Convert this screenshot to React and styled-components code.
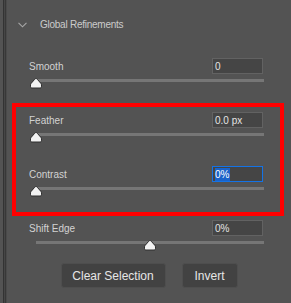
import styled, { createGlobalStyle } from 'styled-components';

const GlobalStyle = createGlobalStyle`
  html, body {
    margin: 0;
    padding: 0;
    background-color: #535353;
  }
  body {
    font-family: "Liberation Sans", Arial, sans-serif;
  }
`;

const Page = styled.div`
  display: flex;
  width: 291px;
  height: 303px;
  background-color: #535353;
  overflow: hidden;
`;

/* the dark double rule on the left edge of the panel */
const EdgeStrip = styled.div`
  flex: 0 0 4px;
  margin-left: 3px;
  background: linear-gradient(
    to right,
    #333333 0 1px,
    #464646 1px 2px,
    #383838 2px 3px,
    #4a4a4a 3px 4px
  );
`;

const Content = styled.div`
  flex: 1;
  display: flex;
  flex-direction: column;
  padding: 17px 7px 0 5px;
`;

const SectionHeader = styled.div`
  display: flex;
  align-items: center;
  height: 16px;
  padding-left: 6px;
  gap: 13px;
`;

const Chevron = styled.svg`
  display: block;
  margin-top: -1px;
`;

const SectionTitle = styled.span`
  font-size: 10px;
  line-height: 16px;
  letter-spacing: -0.25px;
  color: #cbcbcb;
`;

const Controls = styled.div`
  display: flex;
  flex-direction: column;
  margin-top: 25px;
  padding: 0 21px 0 17px;
`;

const Highlight = styled.div`
  display: flex;
  flex-direction: column;
  margin: -9px -21px 4px -17px;
  padding: 5px 17px 0 13px;
  border: 4px solid #ff0000;

  & > div:last-child {
    margin-bottom: 16px;
  }
`;

const Control = styled.div`
  display: flex;
  flex-direction: column;
  margin-bottom: ${(p) => (p.$last ? '13px' : '24px')};
`;

const LabelRow = styled.div`
  display: flex;
  align-items: center;
  justify-content: space-between;
  height: 16px;
`;

const Label = styled.span`
  font-size: 10px;
  line-height: 16px;
  color: #d2d2d2;
  padding-top: ${(p) => (p.$low ? '2px' : '1px')};
`;

const ValueBox = styled.div`
  box-sizing: border-box;
  width: 51px;
  height: 16px;
  padding-left: 2px;
  display: flex;
  align-items: center;
  background-color: #454545;
  border: 1px solid ${(p) => (p.$focused ? '#1473e6' : '#626262')};
  font-size: 10px;
  color: #e4e4e4;
`;

const Selected = styled.span`
  display: inline-block;
  height: 13px;
  line-height: 13px;
  padding-right: 1px;
  background-color: #1a63c9;
  color: #ffffff;
`;

const Slider = styled.div`
  position: relative;
  height: 10px;
  margin: 4px -1px 0 7px;
`;

const Track = styled.div`
  height: 3px;
  margin-top: 1px;
  background-color: #767676;
`;

const Thumb = styled.svg`
  position: absolute;
  top: 0;
  display: block;
`;

const ButtonRow = styled.div`
  display: flex;
  justify-content: center;
  gap: 16px;
  padding-left: 2px;
`;

const Button = styled.button`
  box-sizing: border-box;
  height: 25px;
  width: ${(p) => p.$width}px;
  padding: 0;
  background-color: #424242;
  border: 1px solid #4e4e4e;
  border-radius: 3px;
  font-family: "Liberation Sans", Arial, sans-serif;
  font-size: 12px;
  color: #e6e6e6;
`;

const SliderThumb = ({ value }) => (
  <Thumb
    width="12"
    height="11"
    viewBox="0 0 12 11"
    style={{ left: `calc(${value * 100}% - 6px)` }}
  >
    <path
      d="M6 0.5 C6.6 0.5 7 0.9 7.4 1.4 L10.9 5.4 C11.3 5.9 11.5 6.4 11.5 7 V8.8 C11.5 9.5 11 10 10.3 10 H1.7 C1 10 0.5 9.5 0.5 8.8 V7 C0.5 6.4 0.7 5.9 1.1 5.4 L4.6 1.4 C5 0.9 5.4 0.5 6 0.5 Z"
      fill="#f2f2f2"
      stroke="#2e2e2e"
      strokeWidth="1"
    />
  </Thumb>
);

const SliderControl = ({ label, value, position, focused, last, low }) => (
  <Control $last={last}>
    <LabelRow>
      <Label $low={low}>{label}</Label>
      <ValueBox $focused={focused}>
        {focused ? <Selected>{value}</Selected> : value}
      </ValueBox>
    </LabelRow>
    <Slider>
      <Track />
      <SliderThumb value={position} />
    </Slider>
  </Control>
);

const App = () => (
  <>
    <GlobalStyle />
    <Page>
      <EdgeStrip />
      <Content>
        <SectionHeader>
          <Chevron width="9" height="6" viewBox="0 0 9 6">
            <polyline
              points="0.5,0.8 4.5,4.8 8.5,0.8"
              fill="none"
              stroke="#a8a8a8"
              strokeWidth="1.1"
            />
          </Chevron>
          <SectionTitle>Global Refinements</SectionTitle>
        </SectionHeader>

        <Controls>
          <SliderControl label="Smooth" value="0" position={0} />
          <Highlight>
            <SliderControl label="Feather" value="0.0 px" position={0} />
            <SliderControl label="Contrast" value="0%" position={0} focused />
          </Highlight>
          <SliderControl label="Shift Edge" value="0%" position={0.5} last low />
        </Controls>

        <ButtonRow>
          <Button $width={105}>Clear Selection</Button>
          <Button $width={56}>Invert</Button>
        </ButtonRow>
      </Content>
    </Page>
  </>
);

export default App;
